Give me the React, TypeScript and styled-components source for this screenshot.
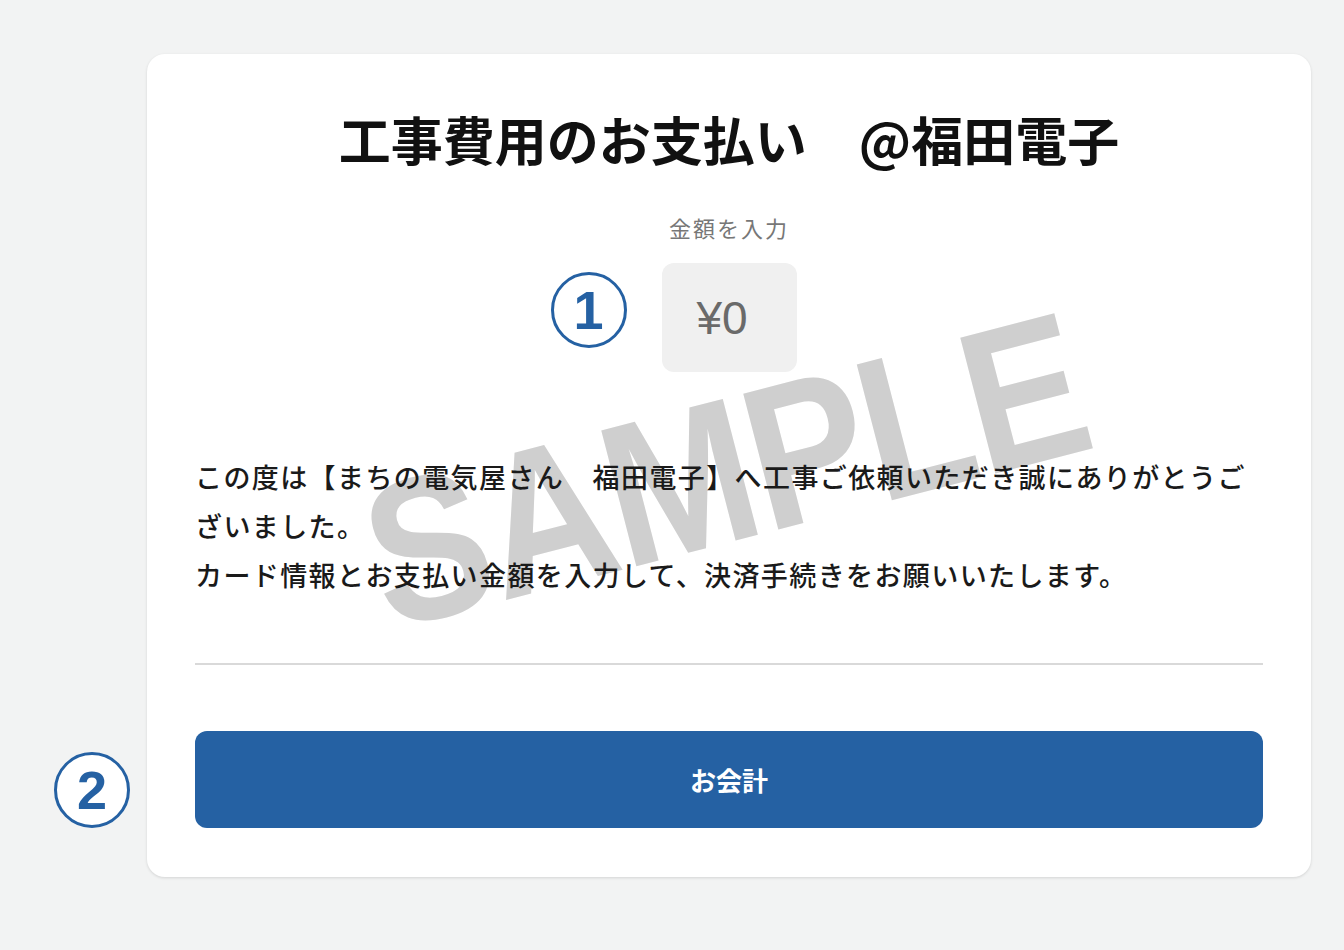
import React from "react";
import styled, { createGlobalStyle } from "styled-components";

const GlobalStyle = createGlobalStyle`
  html, body {
    margin: 0;
    padding: 0;
    background: #f2f3f3;
  }
  body {
    font-family: "Noto Sans CJK JP", "Noto Sans", sans-serif;
    color: #1c1c1c;
  }
`;

const Page = styled.div`
  width: 1344px;
  height: 950px;
  padding: 54px 0 0 147px;
  box-sizing: border-box;
`;

const Card = styled.section`
  position: relative;
  width: 1164px;
  box-sizing: border-box;
  padding: 54px 48px 49px;
  background: #ffffff;
  border-radius: 18px;
  box-shadow: 0 1px 3px rgba(0, 0, 0, 0.13);
  display: flex;
  flex-direction: column;
  align-items: center;
`;

const Watermark = styled.div`
  position: absolute;
  left: 578px;
  top: 416px;
  transform: translate(-50%, -50%) rotate(-14.5deg) scaleX(0.88);
  font-family: "Liberation Sans", Arial, sans-serif;
  font-weight: 700;
  font-size: 204px;
  line-height: 1;
  color: #cfcfcf;
  white-space: nowrap;
  letter-spacing: -3px;
  z-index: 0;
  pointer-events: none;
  user-select: none;
`;

const Title = styled.h1`
  position: relative;
  z-index: 1;
  margin: 0;
  font-size: 52px;
  line-height: 62px;
  font-weight: 700;
  color: #111;
  white-space: nowrap;
`;

const Label = styled.div`
  position: relative;
  z-index: 1;
  margin-top: 42px;
  font-size: 22px;
  line-height: 30px;
  letter-spacing: 2px;
  color: #777;
`;

const AmountWrap = styled.div`
  position: relative;
  z-index: 1;
  margin-top: 21px;
`;

const AmountBox = styled.div`
  width: 135px;
  height: 109px;
  box-sizing: border-box;
  padding-right: 14px;
  border-radius: 12px;
  background: #f0f0f0;
  display: flex;
  align-items: center;
  justify-content: center;
  font-family: "Liberation Sans", Arial, sans-serif;
  font-size: 46px;
  color: #6a6a6a;
`;

const Badge = styled.div<{ $gap: number; $top: number }>`
  position: absolute;
  right: calc(100% + ${(p) => p.$gap}px);
  top: ${(p) => p.$top}px;
  width: 76px;
  height: 76px;
  box-sizing: border-box;
  border: 3.5px solid #2561a3;
  border-radius: 50%;
  background: #ffffff;
  display: flex;
  align-items: center;
  justify-content: center;
  font-family: "Liberation Sans", Arial, sans-serif;
  font-weight: 700;
  font-size: 54px;
  line-height: 1;
  color: #2561a3;
`;

const Message = styled.p`
  position: relative;
  z-index: 1;
  align-self: stretch;
  margin: 80px 0 0;
  font-size: 27px;
  font-weight: 500;
  line-height: 49px;
  letter-spacing: 1.4px;
  color: #1a1a1a;
`;

const Divider = styled.hr`
  align-self: stretch;
  margin: 64px 0 0;
  border: none;
  height: 2px;
  background: #d9d9d9;
`;

const ButtonWrap = styled.div`
  position: relative;
  align-self: stretch;
  margin-top: 66px;
`;

const PayButton = styled.button`
  width: 100%;
  height: 97px;
  border: none;
  border-radius: 12px;
  background: #2561a3;
  color: #ffffff;
  font-family: "Noto Sans CJK JP", sans-serif;
  font-weight: 700;
  font-size: 26px;
  cursor: pointer;
`;

export default function App() {
  return (
    <>
      <GlobalStyle />
      <Page>
        <Card>
          <Watermark>SAMPLE</Watermark>
          <Title>工事費用のお支払い　@福田電子</Title>
          <Label>金額を入力</Label>
          <AmountWrap>
            <Badge $gap={35} $top={9}>1</Badge>
            <AmountBox>¥0</AmountBox>
          </AmountWrap>
          <Message>
            この度は【まちの電気屋さん　福田電子】へ工事ご依頼いただき誠にありがとうございました。
            <br />
            カード情報とお支払い金額を入力して、決済手続きをお願いいたします。
          </Message>
          <Divider />
          <ButtonWrap>
            <Badge $gap={65} $top={21}>2</Badge>
            <PayButton>お会計</PayButton>
          </ButtonWrap>
        </Card>
      </Page>
    </>
  );
}
